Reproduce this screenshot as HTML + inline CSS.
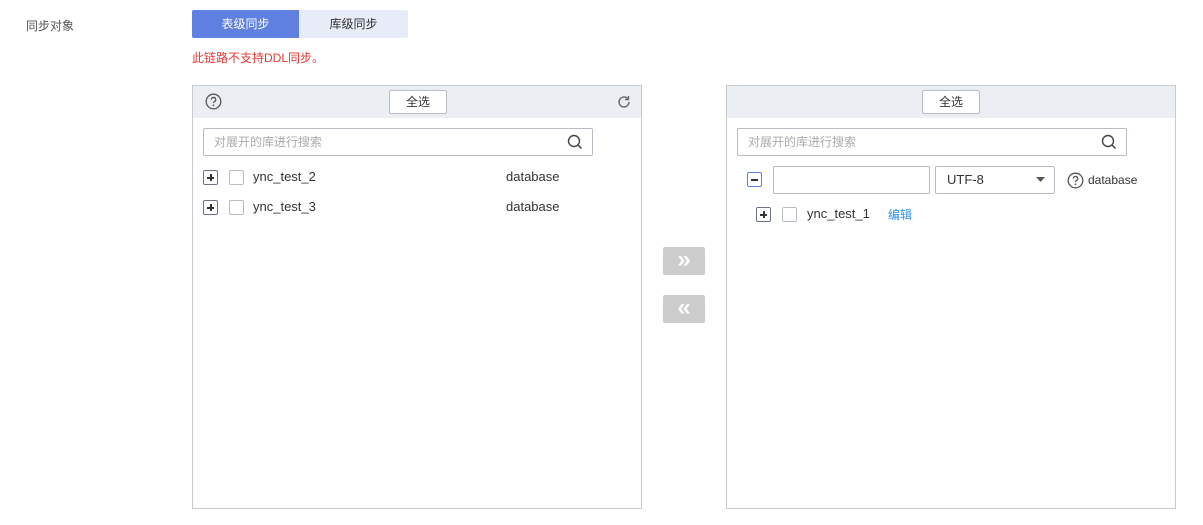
<!DOCTYPE html>
<html><head><meta charset="utf-8"><style>
*{box-sizing:border-box;margin:0;padding:0}
body{width:1203px;height:525px;background:#fff;font-family:"Liberation Sans","Noto Sans CJK SC",sans-serif;font-size:12px;color:#333;position:relative;overflow:hidden}
.a{position:absolute}
.panel{position:absolute;top:85px;width:450px;height:424px;border:1px solid #c8cbd0;background:#fff}
.hd{position:absolute;left:0;top:0;right:0;height:32px;background:#ebeef2}
.btn{position:absolute;top:4px;width:58px;height:24px;border:1px solid #b8bcc4;background:#fff;border-radius:2px;text-align:center;line-height:22px;font-size:12px;color:#333}
.search{position:absolute;top:42px;height:28px;width:390px;border:1px solid #b8bcc4;border-radius:2px;color:#aaa;font-size:12px;line-height:26px;padding-left:10px}
.plus{position:absolute;width:15px;height:15px;border:1px solid #6a7388;border-radius:2px}
.plus:before{content:"";position:absolute;left:3px;top:6px;width:7px;height:1.5px;background:#333}
.plus.p:after{content:"";position:absolute;left:6px;top:3px;width:1.5px;height:7px;background:#333}
.cb{position:absolute;width:15px;height:15px;border:1px solid #b8bcc4;border-radius:2px;background:#fff}
.t{position:absolute;font-size:13px;color:#333}
.arr{position:absolute;left:663px;width:42px;height:28px;background:#cccccc;border-radius:2px;color:#fff;text-align:center;font-size:24px;line-height:25px;font-weight:bold}
</style></head><body>
<div class="a" style="left:26px;top:17px;font-size:12px;color:#555">同步对象</div>
<div class="a" style="left:192px;top:10px;width:107px;height:28px;background:#5f7fe1;color:#fff;text-align:center;line-height:28px;border-radius:2px 0 0 2px">表级同步</div>
<div class="a" style="left:299px;top:10px;width:109px;height:28px;background:#e8ecf8;color:#333;text-align:center;line-height:28px;border-radius:0 2px 2px 0">库级同步</div>
<div class="a" style="left:192px;top:49px;color:#e53935">此链路不支持DDL同步。</div>

<div class="panel" style="left:192px">
 <div class="hd"></div>
 <svg class="a" style="left:12px;top:7px" width="17" height="17" viewBox="0 0 17 17"><circle cx="8.5" cy="8.5" r="7.3" fill="none" stroke="#555" stroke-width="1.3"/><path d="M6.3 6.6a2.2 2.2 0 1 1 3 2.1c-.6.3-.8.7-.8 1.4" fill="none" stroke="#555" stroke-width="1.3"/><circle cx="8.5" cy="12.3" r=".9" fill="#555"/></svg>
 <div class="btn" style="left:196px">全选</div>
 <svg class="a" style="left:424px;top:9px" width="14" height="14" viewBox="0 0 14 14"><path d="M12 7a5 5 0 1 1-1.5-3.6" fill="none" stroke="#666" stroke-width="1.4"/><path d="M11.5 1v3.5H8" fill="none" stroke="#666" stroke-width="1.4"/></svg>
 <div class="search" style="left:10px">对展开的库进行搜索</div>
 <svg class="a" style="left:374px;top:48px" width="16" height="16" viewBox="0 0 16 16"><circle cx="7" cy="7" r="5.5" fill="none" stroke="#444" stroke-width="1.4"/><path d="M11 11l3.5 3.5" stroke="#444" stroke-width="1.5"/></svg>
 <div class="plus p" style="left:10px;top:84px"></div><div class="cb" style="left:36px;top:84px"></div><div class="t" style="left:60px;top:83px">ync_test_2</div><div class="t" style="left:313px;top:83px">database</div>
 <div class="plus p" style="left:10px;top:114px"></div><div class="cb" style="left:36px;top:114px"></div><div class="t" style="left:60px;top:113px">ync_test_3</div><div class="t" style="left:313px;top:113px">database</div>
</div>

<div class="arr" style="top:247px">»</div>
<div class="arr" style="top:295px">«</div>

<div class="panel" style="left:726px">
 <div class="hd"></div>
 <div class="btn" style="left:195px">全选</div>
 <div class="search" style="left:10px">对展开的库进行搜索</div>
 <svg class="a" style="left:374px;top:48px" width="16" height="16" viewBox="0 0 16 16"><circle cx="7" cy="7" r="5.5" fill="none" stroke="#444" stroke-width="1.4"/><path d="M11 11l3.5 3.5" stroke="#444" stroke-width="1.5"/></svg>
 <div class="plus" style="left:20px;top:86px;border-color:#5f7fe1"></div>
 <div class="a" style="left:46px;top:80px;width:157px;height:28px;border:1px solid #b8bcc4;border-radius:2px"></div>
 <div class="a" style="left:208px;top:80px;width:120px;height:28px;border:1px solid #b8bcc4;border-radius:2px;padding-left:11px;line-height:26px;font-size:13px">UTF-8</div>
 <svg class="a" style="left:309px;top:91px" width="9" height="6"><path d="M0 0h9L4.5 5z" fill="#555"/></svg>
 <svg class="a" style="left:340px;top:86px" width="17" height="17" viewBox="0 0 17 17"><circle cx="8.5" cy="8.5" r="7.3" fill="none" stroke="#555" stroke-width="1.3"/><path d="M6.3 6.6a2.2 2.2 0 1 1 3 2.1c-.6.3-.8.7-.8 1.4" fill="none" stroke="#555" stroke-width="1.3"/><circle cx="8.5" cy="12.3" r=".9" fill="#555"/></svg>
 <div class="t" style="left:361px;top:87px;font-size:12px">database</div>
 <div class="plus p" style="left:29px;top:121px"></div><div class="cb" style="left:55px;top:121px"></div><div class="t" style="left:80px;top:120px">ync_test_1</div>
 <div class="t" style="left:161px;top:120px;color:#2e8ff0;font-size:12px">编辑</div>
</div>
</body></html>
